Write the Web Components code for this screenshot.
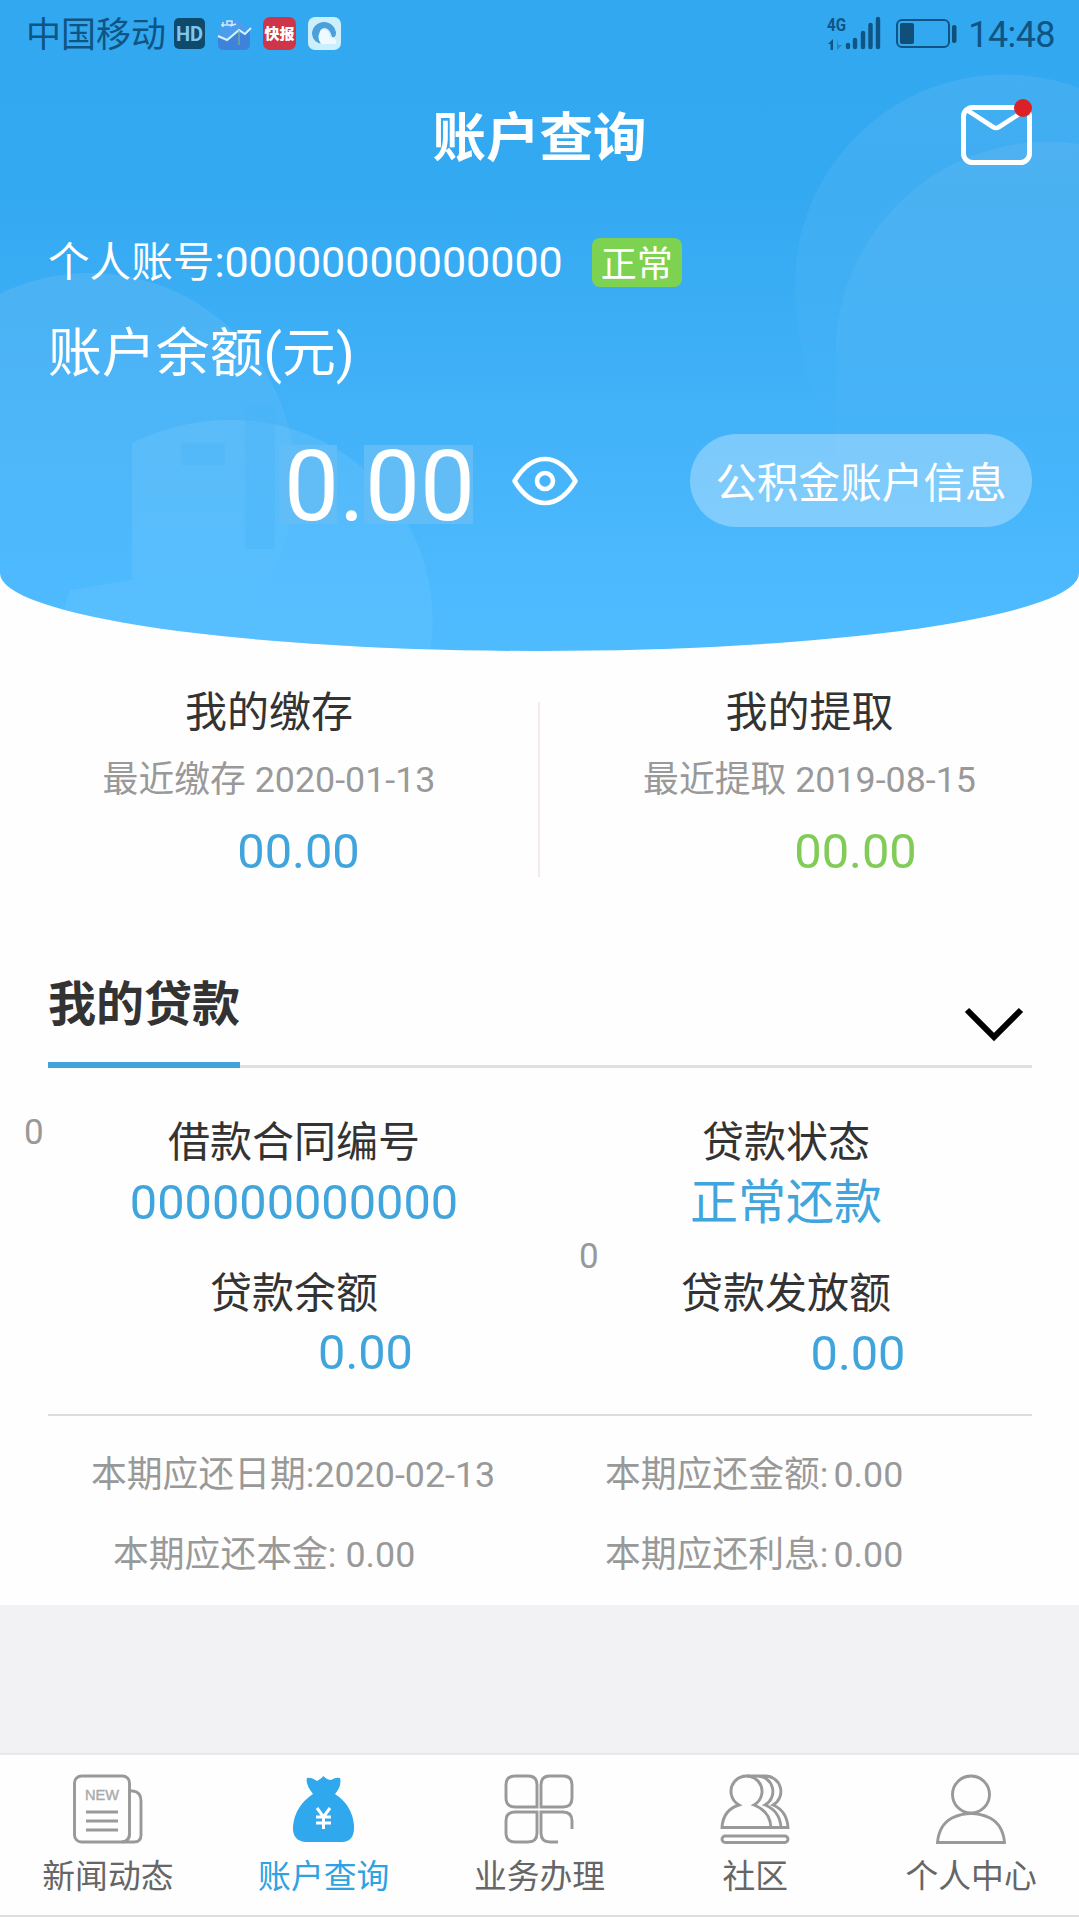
<!DOCTYPE html>
<html lang="zh-CN">
<head>
<meta charset="utf-8">
<title>账户查询</title>
<style>
body{
  margin:0;
  background:#fefefe;
  color:#333;
  font-family: Roboto, "Noto Sans CJK SC", sans-serif;
}
</style>
</head>
<body>
<account-page></account-page>

<script>
function define(name, html){
  const template = document.createElement("template");
  template.innerHTML = html;
  customElements.define(name, class extends HTMLElement{
    constructor(){
      super();
      this.attachShadow({mode:"open"}).appendChild(template.content.cloneNode(true));
    }
  });
}

/* phone status bar */
define("status-bar", `
<style>
:host{
  display:flex;
  align-items:center;
  height:68px;
  padding:0 24px 0 26px;
  box-sizing:border-box;
  color:#0f5482;
}
.carrier{ font-size:35px; line-height:68px; margin:4px 8px 0 0; }
svg{ display:block; flex:none; overflow:visible; }
.apps{ display:flex; gap:12px; }
.right{ display:flex; align-items:center; margin-left:auto; }
.time{ font-size:36px; line-height:68px; margin:2px 0 0 10px; letter-spacing:-.6px; }
</style>
<span class="carrier">中国移动</span>
<div class="apps">
  <svg width="32" height="34" viewBox="0 0 32 34">
    <rect y="1" width="31" height="31" rx="5" fill="#0d4a6c"/>
    <text x="15.500" y="24" font-family="Roboto" font-weight="700" font-size="20" fill="#7fc6ef" text-anchor="middle">HD</text>
  </svg>
  <svg width="33" height="34" viewBox="0 0 33 34">
    <path d="M0 18L5 6 18 2 32 12V26Q32 33 25 33H7Q0 33 0 26Z" fill="#4c9dee"/>
    <path d="M0 21L11 23 20 15 26 18 32 14V27Q32 33 26 33H6Q0 33 0 27Z" fill="#3f82dc"/>
    <path d="M0 19L9 23 21 13 27 17 33 11" fill="none" stroke="#d5f3ff" stroke-width="2"/>
    <path d="M21 13V28" stroke="#8fb67f" stroke-width="1"/>
    <path d="M3 8H8M5 5V10M9 4H14V8H9ZM12 9L18 7" fill="none" stroke="#cdeaff" stroke-width="1.500"/>
  </svg>
  <svg width="33" height="34" viewBox="0 0 33 34">
    <rect y="0" width="33" height="33" rx="7" fill="#cf3548"/>
    <text x="16.500" y="22" font-family="Noto Sans CJK SC" font-weight="900" font-size="15" fill="#fff" text-anchor="middle">快报</text>
  </svg>
  <svg width="33" height="34" viewBox="0 0 33 34">
    <rect width="33" height="33" rx="7" fill="#cdeefb"/>
    <path d="M4 17A12 12 0 1 1 28 17Q27 21 24 20 22 11 16 11 10 12 12 20L15 27Q5 26 4 17Z" fill="#4b9fda"/>
    <path d="M13 27Q7 18 15 12 22 13 22 20 29 21 28 27Z" fill="#eefaff"/>
  </svg>
</div>
<div class="right">
  <svg width="57" height="36" viewBox="0 0 57 36">
    <text x="0" y="15" font-family="Roboto" font-weight="700" font-size="19" textLength="19" lengthAdjust="spacingAndGlyphs" fill="#0f5482">4G</text>
    <path d="M1 28L6 23V34H3.500V28Z" fill="#0f5482"/>
    <path d="M10 23V34L15 29H11Z" fill="#2f80b5"/>
    <g stroke="#0f5482" stroke-width="4.400" stroke-linecap="round">
      <path d="M21 29V31M28 24V31M36 17V31M43.500 9V31M51 3V31"/>
    </g>
  </svg>
  <svg width="62" height="34" viewBox="0 0 62 34" style="margin-left:12px">
    <rect x="1" y="3" width="52" height="27" rx="5" fill="none" stroke="#0f5482" stroke-width="2"/>
    <rect x="4" y="6" width="14" height="21" rx="2" fill="#0f4f78"/>
    <rect x="56" y="8" width="4.500" height="18" rx="2" fill="#0f4f78"/>
  </svg>
  <span class="time">14:48</span>
</div>
`);

define("mail-button", `
<style>
:host{ display:block; width:76px; height:70px; }
svg{ display:block; }
</style>
<svg width="76" height="70" viewBox="0 0 76 70">
  <rect x="3.500" y="9.500" width="66" height="55" rx="9" fill="none" stroke="#fff" stroke-width="5"/>
  <path d="M7 12L33 29Q36 31 39 29L64 13" fill="none" stroke="#fff" stroke-width="4.600"/>
  <circle cx="63" cy="10" r="9" fill="#dc2027"/>
</svg>
`);

define("title-bar", `
<style>
:host{
  display:grid;
  grid-template-columns:1fr auto 1fr;
  align-items:center;
  height:138px;
  padding:0 43px;
}
h1{
  grid-column:2;
  margin:4px 0 0;
  font-size:53.500px;
  line-height:70px;
  font-weight:700;
  color:#fff;
}
.action{ justify-self:end; margin-top:-8px; }
</style>
<h1><slot></slot></h1>
<div class="action"><slot name="action"></slot></div>
`);

define("state-tag", `
<style>
:host{
  display:block;
  height:49px;
  padding:0 9px;
  border-radius:8px;
  background:#7dd251;
  font-size:36px;
  line-height:54px;
  color:#fff;
}
</style>
<slot></slot>
`);

define("pill-button", `
<style>
:host{
  display:block;
  width:342px;
  height:93px;
  border-radius:47px;
  background:rgba(255,255,255,.3);
  font-size:41.600px;
  line-height:99px;
  text-align:center;
  color:#fff;
}
</style>
<slot></slot>
`);

/* blue panel with the curved bottom edge */
define("account-header", `
<style>
:host{
  display:block;
  position:relative;
  height:651px;
  overflow:hidden;
  color:#fff;
  background:linear-gradient(#32a8f1 0, #33a9f1 190px, #3fb0f7 370px, #4fbbff 620px);
  border-radius:0 0 50% 50% / 0 0 78px 78px;
}
.deco{ position:absolute; left:0; top:0; }
.body{ position:relative; }
.account{
  display:flex;
  align-items:center;
  height:112px;
  line-height:113px;
  padding-left:48px;
  font-size:41.600px;
}
.account .no{ font-size:43px; margin-right:29px; }
.label{
  padding-left:48px;
  height:70px;
  line-height:72px;
  font-size:53.900px;
}
.balance{
  display:flex;
  align-items:center;
  height:184px;
  padding:0 47px 0 279px;
}
.amount{
  padding:0 0 0 5px;
  height:79px;
  line-height:83px;
  font-size:98px;
  margin-top:8px;
  background:
    linear-gradient(#62bcf6,#62bcf6) 0 0/58px 79px no-repeat,
    linear-gradient(#62bcf6,#62bcf6) 85px 0/109px 79px no-repeat;
}
.eye{ display:block; margin:2px 0 0 36px; }
pill-button{ margin-left:auto; }
</style>
<svg class="deco" width="1079" height="651" viewBox="0 0 1079 651">
  <defs>
    <linearGradient id="fade" x1="0" y1="0" x2="0" y2="1">
      <stop offset="0" stop-color="#8cc8f2" stop-opacity=".22"/>
      <stop offset=".5" stop-color="#84caf8" stop-opacity=".12"/>
      <stop offset=".85" stop-color="#7ccbff" stop-opacity="0"/>
    </linearGradient>
    <linearGradient id="soft" x1="0" y1="0" x2="0" y2="1">
      <stop offset="0" stop-color="#84c4f0" stop-opacity=".2"/>
      <stop offset=".55" stop-color="#84c8f4" stop-opacity=".1"/>
      <stop offset="1" stop-color="#7ccbff" stop-opacity="0"/>
    </linearGradient>
    <linearGradient id="low" x1="0" y1="0" x2="0" y2="1">
      <stop offset="0" stop-color="#8cd0fa" stop-opacity=".22"/>
      <stop offset=".7" stop-color="#7cd0ff" stop-opacity=".2"/>
    </linearGradient>
  </defs>
  <path d="M795 285A210 210 0 0 1 1079 88V434H830Q797 370 795 285Z" fill="url(#soft)"/>
  <path d="M836 500V340A213 213 0 0 1 1079 144V500Z" fill="url(#soft)"/>
  <circle cx="90" cy="478" r="205" fill="url(#fade)"/>
  <path d="M132 443Q180 420 228 420A200 200 0 0 1 430 651H50L70 590 132 580Z" fill="url(#low)"/>
  <path d="M245 405H275V549H245ZM181 443H225V465H181Z" fill="#45b2f9" opacity=".3"/>
</svg>
<div class="body">
  <status-bar></status-bar>
  <title-bar>账户查询<mail-button slot="action"></mail-button></title-bar>
  <div class="account"><span>个人账号:</span><span class="no">00000000000000</span><state-tag>正常</state-tag></div>
  <div class="label">账户余额(元)</div>
  <div class="balance">
    <div class="amount">0.00</div>
    <svg class="eye" width="68" height="52" viewBox="0 0 68 52">
      <path d="M3.500 26Q17 4 34 4T64.500 26Q51 48 34 48T3.500 26Z" fill="none" stroke="#fff" stroke-width="4.600" stroke-linejoin="round"/>
      <circle cx="34" cy="26" r="8" fill="none" stroke="#fff" stroke-width="4.600"/>
    </svg>
    <pill-button>公积金账户信息</pill-button>
  </div>
</div>
`);

define("summary-item", `
<style>
:host{ display:block; text-align:center; }
.name{ font-size:42px; line-height:64px; height:60px; }
.date{ font-size:35.800px; line-height:78px; height:76px; color:#999; }
.sum{ font-size:48.800px; line-height:70px; height:68px; color:var(--sum-color,#3fa5dc); padding-left:var(--sum-shift,0); }
</style>
<div class="name"><slot name="name"></slot></div>
<div class="date"><slot name="date"></slot></div>
<div class="sum"><slot></slot></div>
`);

define("summary-row", `
<style>
:host{
  display:grid;
  grid-template-columns:538px 2px 1fr;
  padding-top:30px;
}
i{ margin:21px 0 8px; background:#f3e9ee; }
</style>
<slot name="left"></slot>
<i></i>
<slot name="right"></slot>
`);

define("section-head", `
<style>
:host{
  display:flex;
  justify-content:space-between;
  height:95px;
  margin:88px 47px 0 48px;
  box-shadow:inset 0 -3px #e0e0e0;
}
h2{
  margin:0;
  height:89px;
  border-bottom:6px solid #42a3da;
  font-size:48px;
  line-height:64px;
  font-weight:700;
}
svg{ display:block; margin:33px 8px 0 0; }
</style>
<h2><slot></slot></h2>
<svg width="60" height="38" viewBox="0 0 60 38">
  <path d="M3 4L30 31L57 4" fill="none" stroke="#000" stroke-width="6"/>
</svg>
`);

define("loan-item", `
<style>
:host{ display:block; position:relative; text-align:center; }
.name{ font-size:42px; line-height:63px; height:60px; }
.value{ font-size:48.700px; line-height:var(--value-line,64px); height:62px; color:#3fa5dc; padding-left:var(--value-shift,0); }
.value ::slotted(.cn){ font-size:48px; }
/* small index mark hanging over the cell's corner */
.mark{
  position:absolute;
  left:var(--mark-x,0);
  top:var(--mark-y,0);
  font-size:35px;
  line-height:40px;
  color:#999;
}
</style>
<span class="mark"><slot name="mark"></slot></span>
<div class="name"><slot name="name"></slot></div>
<div class="value"><slot></slot></div>
`);

define("loan-grid", `
<style>
:host{
  display:grid;
  grid-template-columns:1fr 1fr;
  row-gap:29px;
  margin:0 47px 0 48px;
  padding:43px 0 30px;
  border-bottom:2px solid #dcdcdd;
}
</style>
<slot></slot>
`);

define("due-item", `
<style>
:host{
  display:flex;
  height:80px;
  padding-left:65px;
  font-size:35.800px;
  line-height:82px;
  color:#999;
}
.value{ margin-left:var(--gap,5px); }
</style>
<span><slot name="name"></slot></span>
<span class="value"><slot></slot></span>
`);

define("due-grid", `
<style>
:host{
  display:grid;
  grid-template-columns:1fr 1fr;
  padding:18px 47px 11px 48px;
}
</style>
<slot></slot>
`);

define("tab-item", `
<style>
:host{
  display:flex;
  flex-direction:column;
  align-items:center;
  color:#666;
  --line:#999;
}
:host([active]){ color:#2fa3e2; }
.label{ font-size:32.800px; line-height:40px; margin-top:13px; }
::slotted(svg){ display:block; fill:none; stroke:var(--line); stroke-width:2.900; }
</style>
<slot name="icon"></slot>
<span class="label"><slot></slot></span>
`);

define("tab-bar", `
<style>
:host{
  display:grid;
  grid-template-columns:repeat(5,1fr);
  height:141px;
  padding-top:19px;
  background:#fefefe;
  border-bottom:2px solid #dedee0;
}
</style>
<slot></slot>
`);

define("account-page", `
<style>
:host{ display:block; width:1079px; height:1917px; overflow:hidden; }
.blank{ height:148px; background:#f2f2f4; border-bottom:2px solid #e9e9ed; }
</style>
<account-header></account-header>
<summary-row>
  <summary-item slot="left" style="--sum-shift:59px">
    <span slot="name">我的缴存</span>
    <span slot="date">最近缴存 2020-01-13</span>
    00.00
  </summary-item>
  <summary-item slot="right" style="--sum-color:#80cc56;--sum-shift:92px">
    <span slot="name">我的提取</span>
    <span slot="date">最近提取 2019-08-15</span>
    00.00
  </summary-item>
</summary-row>
<section-head>我的贷款</section-head>
<loan-grid>
  <loan-item style="--mark-x:-24px;--mark-y:2px;--value-line:63px"><span slot="mark">0</span><span slot="name">借款合同编号</span>000000000000</loan-item>
  <loan-item><span slot="name">贷款状态</span><span class="cn">正常还款</span></loan-item>
  <loan-item style="--value-shift:143px;--value-line:61px"><span slot="name">贷款余额</span>0.00</loan-item>
  <loan-item style="--value-shift:144px;--mark-x:39px;--mark-y:-25px"><span slot="mark">0</span><span slot="name">贷款发放额</span>0.00</loan-item>
</loan-grid>
<due-grid>
  <due-item style="padding-left:43px;--gap:0"><span slot="name">本期应还日期:</span>2020-02-13</due-item>
  <due-item><span slot="name">本期应还金额:</span>0.00</due-item>
  <due-item style="--gap:9px"><span slot="name">本期应还本金:</span>0.00</due-item>
  <due-item><span slot="name">本期应还利息:</span>0.00</due-item>
</due-grid>
<div class="blank"></div>
<tab-bar>
  <tab-item>
    <svg slot="icon" width="70" height="70" viewBox="0 0 70 70">
      <rect x="1.500" y="2" width="55" height="66" rx="7"/>
      <path d="M57 17H60Q68 18 68 27V61Q68 68 61 68H49Q56 67 56.500 60"/>
      <path d="M13 38H45M13 47H45M13 56H45"/>
      <text x="29" y="26" font-family="Liberation Sans" font-size="14.500" text-anchor="middle" textLength="34" lengthAdjust="spacingAndGlyphs" stroke="#aaa" stroke-width=".4" fill="#aaa">NEW</text>
    </svg>
    新闻动态
  </tab-item>
  <tab-item active>
    <svg slot="icon" width="70" height="70" viewBox="0 0 70 70">
      <g transform="translate(-1 0)">
        <path d="M19 4Q23 3 29 7Q33 5 35.500 2Q39 6 43 6Q48 3 52 4Q54 12 47 20Q64 31 66 51Q67 68 54 68H18Q4 67 5 52Q7 32 25 20Q17 10 19 4Z" fill="#30a8ee" stroke="none"/>
        <path d="M29 34L35.500 43L42 34M28 43H43M28 49H43M35.500 43V55" stroke="#fff" stroke-width="3"/>
      </g>
    </svg>
    账户查询
  </tab-item>
  <tab-item>
    <svg slot="icon" width="70" height="70" viewBox="0 0 70 70">
      <path d="M11 2H24Q33 2 33 11V33H11Q2 33 2 24V11Q2 2 11 2Z"/>
      <path d="M46 2H59Q68 2 68 11V24Q68 33 59 33H37V11Q37 2 46 2Z"/>
      <path d="M11 38H33V59Q33 68 24 68H11Q2 68 2 59V47Q2 38 11 38Z"/>
      <path d="M68 55V47Q68 38 59 38H37V59Q37 68 46 68H54"/>
    </svg>
    业务办理
  </tab-item>
  <tab-item>
    <svg slot="icon" width="70" height="70" viewBox="0 0 70 70">
      <path d="M19 31A15.500 15.500 0 1 1 34 31Q50 37 51 53.500H2Q3 36 19 31Z"/>
      <path d="M27 2H37A15.500 15.500 0 0 1 45 31Q60 37 61 53.500H51M37 2H45A15.500 15.500 0 0 1 53 31Q67 37 68 53.500H60"/>
      <rect x="2" y="62" width="66" height="6.500" rx="3.200"/>
    </svg>
    社区
  </tab-item>
  <tab-item>
    <svg slot="icon" width="70" height="70" viewBox="0 0 70 70">
      <circle cx="35" cy="20.500" r="18.500"/>
      <path d="M1.500 68.500Q3 51 16 44Q35 35 54 44Q67 51 68.500 68.500Z"/>
    </svg>
    个人中心
  </tab-item>
</tab-bar>
`);
</script>
</body>
</html>
